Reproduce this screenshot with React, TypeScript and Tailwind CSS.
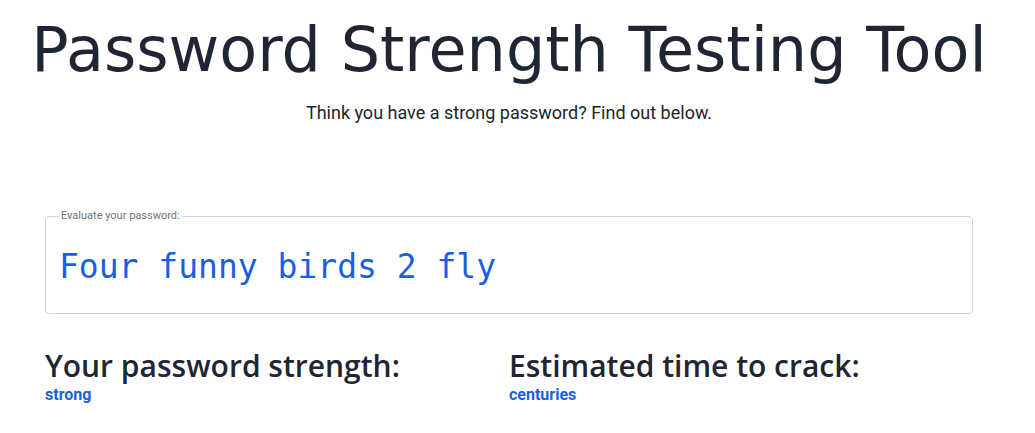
export default function App() {
  return (
    <div className="min-h-screen bg-white font-['Roboto',sans-serif] text-[#212529]">
      <div className="w-[1018px]">
        <h1 className="whitespace-nowrap pt-[10px] text-center font-['DejaVu_Sans',sans-serif] text-[62px] leading-[80px] font-normal text-[#1f2532]">
          Password Strength Testing Tool
        </h1>
        <div className="mx-auto w-[928px]">
          <p className="mt-[11px] text-center text-[18px] leading-[24px]">
            Think you have a strong password? Find out below.
          </p>

          <fieldset className="mt-[85px] rounded-[4px] border border-[#cdd1e0] px-[13px] pb-[26px]">
            <legend className="px-[2px] text-[11px] leading-[12px] text-[#6c757d]">
              Evaluate your password:
            </legend>
            <input
              type="text"
              defaultValue="Four funny birds 2 fly"
              className="mt-[25px] w-full bg-transparent font-['DejaVu_Sans_Mono',monospace] text-[33px] leading-[40px] text-[#1a5fe0] outline-none"
            />
          </fieldset>

          <div className="mt-[33px] grid grid-cols-2">
            <div>
              <h2 className="font-['Open_Sans',sans-serif] text-[30px] leading-[38px] font-semibold text-[#1f2532]">
                Your password strength:
              </h2>
              <div className="mt-[1px] text-[16px] leading-[18px] font-bold text-[#1a5fe0]">strong</div>
            </div>
            <div>
              <h2 className="font-['Open_Sans',sans-serif] text-[30px] leading-[38px] font-semibold text-[#1f2532]">
                Estimated time to crack:
              </h2>
              <div className="mt-[1px] text-[16px] leading-[18px] font-bold text-[#1a5fe0]">centuries</div>
            </div>
          </div>
        </div>
      </div>
    </div>
  );
}
